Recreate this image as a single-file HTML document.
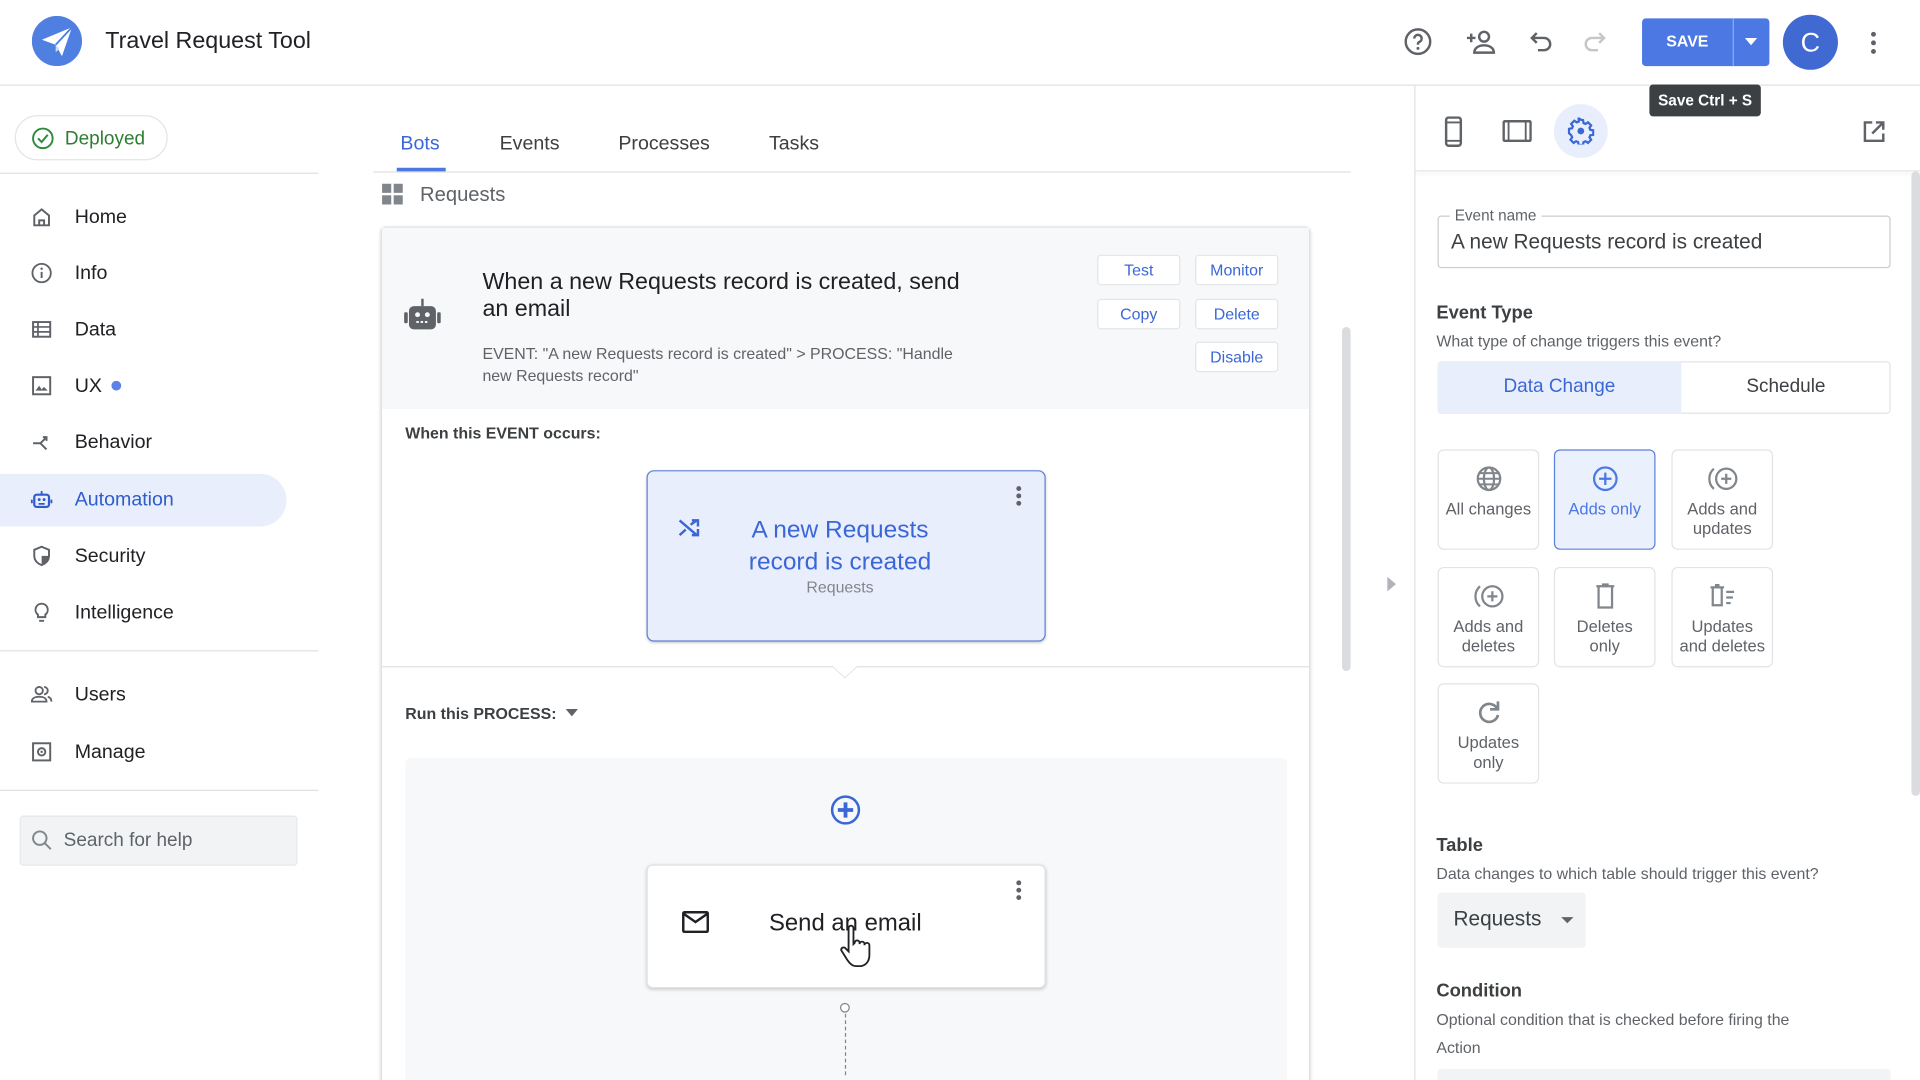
<!DOCTYPE html>
<html><head><meta charset="utf-8">
<style>
*{box-sizing:border-box;margin:0;padding:0}
html,body{width:1920px;height:1080px;overflow:hidden;background:#fff;font-family:"Liberation Sans",Arial,sans-serif;color:#202124}
#w{position:absolute;left:0;top:0;width:1568px;height:882px;transform:scale(1.22449);transform-origin:0 0;overflow:hidden}
.a{position:absolute}
.t{position:absolute;white-space:nowrap}
.nav{position:absolute;left:25px;font-size:16px;color:#202124}
.nav svg{position:absolute;left:0;top:0}
.nav span{position:absolute;left:36px;top:1px;line-height:18px}
.btn{position:absolute;width:68px;height:25px;border:1px solid #e3e5e8;background:#fff;border-radius:3px;color:#3b67d6;font-size:13px;text-align:center;line-height:23px}
.tile{position:absolute;width:83px;height:82px;border:1px solid #e1e3e6;border-radius:5px;text-align:center;font-size:13.5px;color:#5f6368;line-height:16px}
.tile svg{display:block;margin:12px auto 6px}
</style></head><body><div id="w">

<!-- header -->
<div class="a" style="left:0;top:69px;width:1568px;height:1px;background:#e0e0e0"></div>
<svg class="a" style="left:26px;top:13px" width="41" height="41" viewBox="0 0 40 40"><circle cx="20" cy="20" r="20" fill="#4f80e1"/><path d="M8 19 L32 9 L24 32 L19 23 Z" fill="#fff"/><path d="M19 23 L32 9" stroke="#4f80e1" stroke-width="1.5"/><path d="M19 23 L19 29 L22 26" fill="#cfdcf7"/></svg>
<div class="t" style="left:86px;top:23px;font-size:19px;color:#202124">Travel Request Tool</div>
<svg class="a" style="left:1146px;top:22px" width="24" height="24" viewBox="0 0 24 24"><circle cx="12" cy="12" r="10" fill="none" stroke="#5f6368" stroke-width="2"/><path d="M9 9.5a3 3 0 1 1 4 2.8c-1 .4-1 1-1 2.2" fill="none" stroke="#5f6368" stroke-width="2"/><circle cx="12" cy="17.5" r="1.2" fill="#5f6368"/></svg>
<svg class="a" style="left:1197px;top:22px" width="26" height="24" viewBox="0 0 26 24"><circle cx="15" cy="8" r="4" fill="none" stroke="#5f6368" stroke-width="2"/><path d="M7 21c0-4 4-6 8-6s8 2 8 6z" fill="none" stroke="#5f6368" stroke-width="2"/><path d="M1 9h7M4.5 5.5v7" stroke="#5f6368" stroke-width="2"/></svg>
<svg class="a" style="left:1247px;top:22px" width="24" height="24" viewBox="0 0 24 24"><path d="M8 5L4 9l4 4M4 9h10a5 5 0 0 1 0 10H9" fill="none" stroke="#5f6368" stroke-width="2"/></svg>
<svg class="a" style="left:1290px;top:22px" width="24" height="24" viewBox="0 0 24 24"><path d="M16 5l4 4-4 4M20 9H10a5 5 0 0 0 0 10h5" fill="none" stroke="#c4c6c9" stroke-width="2"/></svg>
<div class="a" style="left:1341px;top:15px;width:104px;height:39px;background:#4c78e3;border-radius:3px"></div>
<div class="a" style="left:1415px;top:15px;width:1px;height:39px;background:#8eaaf0"></div>
<div class="t" style="left:1341px;top:26px;width:74px;text-align:center;color:#fff;font-size:13px;font-weight:bold">SAVE</div>
<div class="a" style="left:1425px;top:31px;width:0;height:0;border-left:5px solid transparent;border-right:5px solid transparent;border-top:6px solid #fff"></div>
<div class="a" style="left:1456px;top:12px;width:45px;height:45px;border-radius:50%;background:#4069d2;color:#fff;font-size:22px;text-align:center;line-height:45px">C</div>
<div class="a" style="left:1528px;top:26px;width:4px;height:4px;border-radius:2px;background:#5f6368;box-shadow:0 7px 0 #5f6368,0 14px 0 #5f6368"></div>
<div class="a" style="left:1347px;top:69px;width:91px;height:26px;background:#3c4043;border-radius:3px;color:#fff;font-size:12.5px;font-weight:bold;text-align:center;line-height:26px;z-index:5">Save Ctrl + S</div>

<!-- sidebar -->
<div class="a" style="left:12px;top:94px;width:125px;height:37px;border:1px solid #e3e5e8;border-radius:19px"></div>
<svg class="a" style="left:26px;top:104px" width="18" height="18" viewBox="0 0 18 18"><circle cx="9" cy="9" r="8" fill="none" stroke="#2e8b3e" stroke-width="1.6"/><path d="M5 9l3 3 5-6" fill="none" stroke="#2e8b3e" stroke-width="1.6"/></svg>
<div class="t" style="left:53px;top:105px;font-size:15.5px;color:#2e7d32">Deployed</div>
<div class="a" style="left:0;top:141px;width:260px;height:1px;background:#e0e0e0"></div>
<div class="a" style="left:0;top:387px;width:234px;height:43px;background:#e8eefc;border-radius:0 22px 22px 0"></div>
<div class="nav" style="top:168px"><svg width="18" height="18" viewBox="0 0 18 18"><path d="M3 8l6-5 6 5v8H3z" fill="none" stroke="#5f6368" stroke-width="1.6"/><path d="M7 16v-4h4v4" fill="none" stroke="#5f6368" stroke-width="1.6"/></svg><span>Home</span></div>
<div class="nav" style="top:214px"><svg width="18" height="18" viewBox="0 0 18 18"><circle cx="9" cy="9" r="7.5" fill="none" stroke="#5f6368" stroke-width="1.5"/><path d="M9 8v5" stroke="#5f6368" stroke-width="1.6"/><circle cx="9" cy="5.5" r="1" fill="#5f6368"/></svg><span>Info</span></div>
<div class="nav" style="top:260px"><svg width="18" height="18" viewBox="0 0 18 18"><rect x="2" y="3" width="14" height="12" fill="none" stroke="#5f6368" stroke-width="1.6"/><path d="M2 7h14M2 11h14M6 3v12" stroke="#5f6368" stroke-width="1.4"/></svg><span>Data</span></div>
<div class="nav" style="top:306px"><svg width="18" height="18" viewBox="0 0 18 18"><rect x="2" y="2" width="14" height="14" fill="none" stroke="#5f6368" stroke-width="1.6"/><path d="M4 13l3-4 2 3 2-2 3 3z" fill="#5f6368"/></svg><span>UX</span></div>
<div class="a" style="left:91px;top:311px;width:8px;height:8px;border-radius:4px;background:#5b82e6"></div>
<div class="nav" style="top:352px"><svg width="18" height="18" viewBox="0 0 18 18"><path d="M2 10h6l5-5M8 10l5 5M10 5h3v3" fill="none" stroke="#5f6368" stroke-width="1.6"/></svg><span>Behavior</span></div>
<div class="nav" style="top:399px;color:#2f5cc9"><svg width="18" height="18" viewBox="0 0 18 18"><rect x="3" y="5" width="12" height="10" rx="2" fill="none" stroke="#2f5cc9" stroke-width="1.8"/><circle cx="7" cy="9" r="1.2" fill="#2f5cc9"/><circle cx="11" cy="9" r="1.2" fill="#2f5cc9"/><path d="M9 2v3M1 9v3M17 9v3M6.5 12.5h5" stroke="#2f5cc9" stroke-width="1.5"/></svg><span>Automation</span></div>
<div class="nav" style="top:445px"><svg width="18" height="18" viewBox="0 0 18 18"><path d="M9 1.5l6 2.5v5c0 4-3 6.5-6 7.5-3-1-6-3.5-6-7.5V4z" fill="none" stroke="#5f6368" stroke-width="1.6"/><path d="M9 2v14.5c3-1 6-3.5 6-7.5V9H9" fill="#5f6368"/></svg><span>Security</span></div>
<div class="nav" style="top:491px"><svg width="18" height="18" viewBox="0 0 18 18"><path d="M9 2a5 5 0 0 0-3 9v2h6v-2a5 5 0 0 0-3-9z" fill="none" stroke="#5f6368" stroke-width="1.6"/><path d="M7 16h4" stroke="#5f6368" stroke-width="1.6"/></svg><span>Intelligence</span></div>
<div class="a" style="left:0;top:531px;width:260px;height:1px;background:#e0e0e0"></div>
<div class="nav" style="top:558px"><svg width="18" height="18" viewBox="0 0 18 18"><circle cx="7" cy="6" r="3" fill="none" stroke="#5f6368" stroke-width="1.5"/><path d="M1 15c0-3 3-4 6-4s6 1 6 4z" fill="none" stroke="#5f6368" stroke-width="1.5"/><path d="M11 3a3 3 0 0 1 0 6M14 11c2 .5 3 2 3 4" fill="none" stroke="#5f6368" stroke-width="1.5"/></svg><span>Users</span></div>
<div class="nav" style="top:605px"><svg width="18" height="18" viewBox="0 0 18 18"><rect x="2" y="2" width="14" height="14" fill="none" stroke="#5f6368" stroke-width="1.6"/><circle cx="9" cy="9" r="3" fill="none" stroke="#5f6368" stroke-width="1.6"/><circle cx="9" cy="9" r="1" fill="#5f6368"/></svg><span>Manage</span></div>
<div class="a" style="left:0;top:645px;width:260px;height:1px;background:#e0e0e0"></div>
<div class="a" style="left:16px;top:666px;width:227px;height:41px;background:#f1f3f4;border:1px solid #e6e8ea;border-radius:3px"></div>
<svg class="a" style="left:25px;top:677px" width="18" height="18" viewBox="0 0 18 18"><circle cx="7.5" cy="7.5" r="5.5" fill="none" stroke="#80868b" stroke-width="1.6"/><path d="M11.5 11.5l5 5" stroke="#80868b" stroke-width="1.6"/></svg>
<div class="t" style="left:52px;top:678px;font-size:15.5px;color:#5f6368">Search for help</div>

<!-- tabs -->
<div class="t" style="left:327px;top:109px;font-size:16px;color:#3b67d6">Bots</div>
<div class="a" style="left:324px;top:137px;width:40px;height:3px;background:#4c78e3"></div>
<div class="t" style="left:408px;top:109px;font-size:16px;color:#3c4043">Events</div>
<div class="t" style="left:505px;top:109px;font-size:16px;color:#3c4043">Processes</div>
<div class="t" style="left:628px;top:109px;font-size:16px;color:#3c4043">Tasks</div>
<div class="a" style="left:305px;top:140px;width:798px;height:1px;background:#e0e0e0"></div>
<svg class="a" style="left:312px;top:150px" width="17" height="17" viewBox="0 0 17 17"><rect x="0" y="0" width="7.5" height="7.5" fill="#80868b"/><rect x="9.5" y="0" width="7.5" height="7.5" fill="#80868b"/><rect x="0" y="9.5" width="7.5" height="7.5" fill="#80868b"/><rect x="9.5" y="9.5" width="7.5" height="7.5" fill="#80868b"/></svg>
<div class="t" style="left:343px;top:150px;font-size:16.5px;color:#5f6368">Requests</div>

<!-- card -->
<div class="a" style="left:311px;top:185px;width:759px;height:720px;border:1px solid #dfe1e4;border-radius:4px;box-shadow:0 1px 3px rgba(0,0,0,.15);background:#fff"></div>
<div class="a" style="left:312px;top:186px;width:757px;height:148px;background:#f7f8fa"></div>
<svg class="a" style="left:330px;top:243px" width="30" height="28" viewBox="0 0 30 28"><rect x="4" y="7" width="22" height="19" rx="4" fill="#5f6368"/><rect x="0" y="12" width="3" height="9" rx="1" fill="#5f6368"/><rect x="27" y="12" width="3" height="9" rx="1" fill="#5f6368"/><path d="M15 1v6" stroke="#5f6368" stroke-width="2"/><circle cx="11" cy="14" r="2" fill="#f7f8fa"/><circle cx="19" cy="14" r="2" fill="#f7f8fa"/><path d="M10 20h10" stroke="#f7f8fa" stroke-width="1.6" stroke-dasharray="2 1.5"/></svg>
<div class="a" style="left:394px;top:220px;width:405px;font-size:19px;line-height:22px;color:#202124">When a new Requests record is created, send an email</div>
<div class="a" style="left:394px;top:280px;width:395px;font-size:13px;line-height:18px;color:#5f6368">EVENT: "A new Requests record is created" &gt; PROCESS: "Handle new Requests record"</div>
<div class="btn" style="left:896px;top:208px">Test</div>
<div class="btn" style="left:976px;top:208px">Monitor</div>
<div class="btn" style="left:896px;top:244px">Copy</div>
<div class="btn" style="left:976px;top:244px">Delete</div>
<div class="btn" style="left:976px;top:279px">Disable</div>
<div class="t" style="left:331px;top:346px;font-size:13px;font-weight:bold;color:#3c4043">When this EVENT occurs:</div>
<div class="a" style="left:528px;top:384px;width:326px;height:140px;background:#e9eefc;border:1px solid #5e81d9;border-radius:6px;box-shadow:0 1px 2px rgba(0,0,0,.2)"></div>
<svg class="a" style="left:553px;top:422px" width="20" height="18" viewBox="0 0 20 18"><path d="M2 3l14 12M12 15h5v-5M2 15l5-4.5M11 6.5L16 3M12 3h5v5" fill="none" stroke="#3b67d6" stroke-width="2"/></svg>
<div class="a" style="left:586px;top:420px;width:200px;text-align:center;font-size:20px;line-height:26px;color:#3b67d6">A new Requests record is created</div>
<div class="t" style="left:586px;top:472px;width:200px;text-align:center;font-size:13px;color:#80868b">Requests</div>
<div class="a" style="left:830px;top:397px;width:4px;height:4px;border-radius:2px;background:#5f6368;box-shadow:0 6px 0 #5f6368,0 12px 0 #5f6368"></div>
<div class="a" style="left:312px;top:544px;width:757px;height:1px;background:#dfe1e4"></div>
<div class="a" style="left:679px;top:544px;width:0;height:0;border-left:11px solid transparent;border-right:11px solid transparent;border-top:10px solid #dfe1e4"></div>
<div class="a" style="left:680px;top:544px;width:0;height:0;border-left:10px solid transparent;border-right:10px solid transparent;border-top:9px solid #fff"></div>
<div class="t" style="left:331px;top:575px;font-size:13px;font-weight:bold;color:#3c4043">Run this PROCESS:</div>
<div class="a" style="left:462px;top:579px;width:0;height:0;border-left:5px solid transparent;border-right:5px solid transparent;border-top:6px solid #5f6368"></div>
<div class="a" style="left:331px;top:619px;width:720px;height:270px;background:#f7f8fa;border-radius:4px"></div>
<svg class="a" style="left:678px;top:649px" width="25" height="25" viewBox="0 0 24 24"><circle cx="12" cy="12" r="10.5" fill="none" stroke="#3b67d6" stroke-width="2"/><path d="M12 6v12M6 12h12" stroke="#3b67d6" stroke-width="3"/></svg>
<div class="a" style="left:528px;top:706px;width:326px;height:101px;background:#fff;border:1px solid #e0e2e5;border-radius:5px;box-shadow:0 1px 3px rgba(0,0,0,.2)"></div>
<svg class="a" style="left:557px;top:744px" width="22" height="18" viewBox="0 0 22 18"><rect x="1" y="1" width="20" height="16" rx="1" fill="none" stroke="#202124" stroke-width="2"/><path d="M1 2l10 7 10-7" fill="none" stroke="#202124" stroke-width="2"/></svg>
<div class="t" style="left:628px;top:743px;font-size:19.5px;color:#202124">Send an email</div>
<div class="a" style="left:830px;top:719px;width:4px;height:4px;border-radius:2px;background:#5f6368;box-shadow:0 6px 0 #5f6368,0 12px 0 #5f6368"></div>
<svg class="a" style="left:684px;top:755px" width="30" height="38" viewBox="0 0 30 38"><path d="M9 3a2 2 0 0 1 4 0v13l1-1a2 2 0 0 1 4 0v1a2 2 0 0 1 4 0v1a2 2 0 0 1 4 0v8c0 5-3 9-8 9h-3c-3 0-5-2-7-5l-5-8a2 2 0 0 1 3-2l3 3z" fill="#fff" stroke="#202124" stroke-width="1.5"/></svg>
<div class="a" style="left:686px;top:819px;width:8px;height:8px;border-radius:50%;border:1.5px solid #80868b;background:#fff"></div>
<div class="a" style="left:690px;top:828px;width:0;height:50px;border-left:1px dashed #80868b"></div>
<div class="a" style="left:1096px;top:267px;width:7px;height:281px;background:#dadce0;border-radius:4px"></div>
<div class="a" style="left:1133px;top:471px;width:0;height:0;border-top:6px solid transparent;border-bottom:6px solid transparent;border-left:7px solid #b0b3b8"></div>

<!-- right panel -->
<div class="a" style="left:1155px;top:70px;width:1px;height:812px;background:#e0e0e0"></div>
<div class="a" style="left:1156px;top:139px;width:412px;height:1px;background:#e6e6e6;box-shadow:0 2px 3px rgba(0,0,0,.08)"></div>
<svg class="a" style="left:1179px;top:95px" width="16" height="25" viewBox="0 0 16 25"><rect x="2" y="1" width="12" height="23" rx="2" fill="none" stroke="#5f6368" stroke-width="2"/><path d="M2 5h12M2 20h12" stroke="#5f6368" stroke-width="1.5"/></svg>
<svg class="a" style="left:1227px;top:98px" width="24" height="18" viewBox="0 0 24 18"><rect x="1" y="1" width="22" height="16" rx="1" fill="none" stroke="#5f6368" stroke-width="2"/><path d="M5 1v16M19 1v16" stroke="#5f6368" stroke-width="1.5"/></svg>
<div class="a" style="left:1269px;top:85px;width:44px;height:44px;border-radius:50%;background:#e8eefc"></div>
<svg class="a" style="left:1280px;top:96px" width="22" height="22" viewBox="0 0 24 24"><path d="M12 2l2 .3.4 2.6 1.8.8 2.2-1.5 2.8 2.8-1.5 2.2.8 1.8 2.6.4v4l-2.6.4-.8 1.8 1.5 2.2-2.8 2.8-2.2-1.5-1.8.8-.4 2.6h-4l-.4-2.6-1.8-.8-2.2 1.5-2.8-2.8 1.5-2.2-.8-1.8L1.5 14v-4l2.6-.4.8-1.8-1.5-2.2 2.8-2.8 2.2 1.5 1.8-.8L10 .3z" fill="none" stroke="#3b67d6" stroke-width="2"/><circle cx="12" cy="12" r="3" fill="#3b67d6"/></svg>
<svg class="a" style="left:1521px;top:98px" width="19" height="19" viewBox="0 0 19 19"><path d="M8 2H2v15h15v-6M11 2h6v6M17 2L8 11" fill="none" stroke="#5f6368" stroke-width="2"/></svg>

<div class="a" style="left:1174px;top:176px;width:370px;height:43px;border:1px solid #c9ccd0;border-radius:3px"></div>
<div class="t" style="left:1184px;top:169px;font-size:12.5px;color:#5f6368;background:#fff;padding:0 4px">Event name</div>
<div class="t" style="left:1185px;top:188px;font-size:17px;color:#3c4043">A new Requests record is created</div>
<div class="t" style="left:1173px;top:247px;font-size:15px;font-weight:bold;color:#3c4043">Event Type</div>
<div class="t" style="left:1173px;top:271px;font-size:13px;color:#5f6368">What type of change triggers this event?</div>
<div class="a" style="left:1174px;top:295px;width:370px;height:43px;border:1px solid #e1e3e6;border-radius:3px"></div>
<div class="a" style="left:1174px;top:295px;width:199px;height:43px;background:#e8eefc;border-radius:3px 0 0 3px"></div>
<div class="t" style="left:1174px;top:307px;width:199px;text-align:center;font-size:15.5px;color:#3b67d6">Data Change</div>
<div class="t" style="left:1373px;top:307px;width:171px;text-align:center;font-size:15.5px;color:#3c4043">Schedule</div>

<div class="tile" style="left:1174px;top:367px"><svg width="22" height="22" viewBox="0 0 24 24"><circle cx="12" cy="12" r="10" fill="none" stroke="#80868b" stroke-width="2"/><ellipse cx="12" cy="12" rx="4.5" ry="10" fill="none" stroke="#80868b" stroke-width="2"/><path d="M2 12h20M3.5 7h17M3.5 17h17" stroke="#80868b" stroke-width="1.8"/></svg>All changes</div>
<div class="tile" style="left:1269px;top:367px;background:#ebf0fd;border-color:#5b80da;color:#4c78e3"><svg width="22" height="22" viewBox="0 0 24 24"><circle cx="12" cy="12" r="10" fill="none" stroke="#4c78e3" stroke-width="2"/><path d="M12 6.5v11M6.5 12h11" stroke="#4c78e3" stroke-width="2"/></svg>Adds only</div>
<div class="tile" style="left:1365px;top:367px"><svg width="30" height="22" viewBox="0 0 30 24"><circle cx="18" cy="12" r="9" fill="none" stroke="#80868b" stroke-width="2"/><path d="M18 7.5v9M13.5 12h9" stroke="#80868b" stroke-width="2"/><path d="M7 3a12 12 0 0 0 0 18" fill="none" stroke="#80868b" stroke-width="2"/></svg>Adds and<br>updates</div>
<div class="tile" style="left:1174px;top:463px"><svg width="30" height="22" viewBox="0 0 30 24"><circle cx="18" cy="12" r="9" fill="none" stroke="#80868b" stroke-width="2"/><path d="M18 7.5v9M13.5 12h9" stroke="#80868b" stroke-width="2"/><path d="M7 3a12 12 0 0 0 0 18" fill="none" stroke="#80868b" stroke-width="2"/></svg>Adds and<br>deletes</div>
<div class="tile" style="left:1269px;top:463px"><svg width="22" height="22" viewBox="0 0 24 24"><path d="M4 3h16M9 1.5h6M6 4v18h12V4" fill="none" stroke="#80868b" stroke-width="2"/></svg>Deletes<br>only</div>
<div class="tile" style="left:1365px;top:463px"><svg width="24" height="22" viewBox="0 0 24 24"><path d="M1 4h12M5 2h4M3 5v15h8V5" fill="none" stroke="#80868b" stroke-width="2"/><path d="M15 8h7M15 13h6M15 18h4" stroke="#80868b" stroke-width="2"/></svg>Updates<br>and deletes</div>
<div class="tile" style="left:1174px;top:558px"><svg width="22" height="22" viewBox="0 0 24 24"><path d="M19 8a8 8 0 1 0 1 6" fill="none" stroke="#80868b" stroke-width="2.4"/><path d="M20 2v7h-7" fill="none" stroke="#80868b" stroke-width="2.4"/></svg>Updates<br>only</div>

<div class="t" style="left:1173px;top:682px;font-size:15px;font-weight:bold;color:#3c4043">Table</div>
<div class="t" style="left:1173px;top:706px;font-size:13px;color:#5f6368">Data changes to which table should trigger this event?</div>
<div class="a" style="left:1174px;top:729px;width:121px;height:45px;background:#f1f3f4;border-radius:3px"></div>
<div class="t" style="left:1187px;top:741px;font-size:17px;color:#3c4043">Requests</div>
<div class="a" style="left:1275px;top:749px;width:0;height:0;border-left:5px solid transparent;border-right:5px solid transparent;border-top:5px solid #5f6368"></div>
<div class="t" style="left:1173px;top:801px;font-size:15px;font-weight:bold;color:#3c4043">Condition</div>
<div class="t" style="left:1173px;top:825px;font-size:13px;color:#5f6368">Optional condition that is checked before firing the</div>
<div class="t" style="left:1173px;top:848px;font-size:13px;color:#5f6368">Action</div>
<div class="a" style="left:1174px;top:873px;width:370px;height:20px;background:#f1f3f4;border-radius:3px"></div>
<div class="a" style="left:1561px;top:140px;width:7px;height:510px;background:#dadce0;border-radius:4px"></div>
</div></body></html>
